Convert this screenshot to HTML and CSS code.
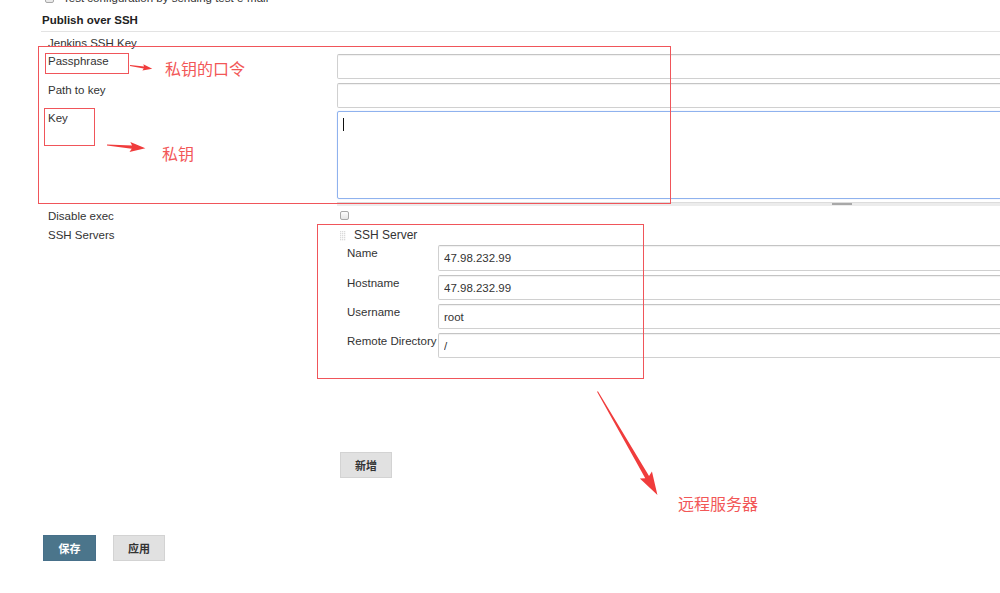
FILE: index.html
```html
<!DOCTYPE html>
<html>
<head>
<meta charset="utf-8">
<link rel="stylesheet" href="styles.css">
</head>
<body>
<div class="page">
  <div class="form">
    <div class="testline"><span class="cb"></span><span>Test configuration by sending test e-mail</span></div>
    <div class="sec-title">Publish over SSH</div>
    <div class="rows">
      <div class="row row-label">Jenkins SSH Key</div>
      <div class="row row-pass">
        <div class="lbl">Passphrase</div>
        <input class="txt" type="text" value="">
      </div>
      <div class="row row-path">
        <div class="lbl">Path to key</div>
        <input class="txt" type="text" value="">
      </div>
      <div class="row row-key">
        <div class="lbl">Key</div>
        <div class="keycol">
          <div class="area"><span class="caret"></span></div>
          <div class="grip"><span class="grip-knob"></span></div>
        </div>
      </div>
      <div class="row row-exec">
        <div class="lbl">Disable exec</div>
        <div><span class="cb cb-exec"></span></div>
      </div>
      <div class="row row-servers">
        <div class="lbl">SSH Servers</div>
        <div class="servers">
          <div class="srv-head"><span class="handle"></span><span>SSH Server</span></div>
          <div class="srv-rows">
            <div class="srow srow-first"><div class="slbl">Name</div><input class="txt" type="text" value="47.98.232.99"></div>
            <div class="srow"><div class="slbl">Hostname</div><input class="txt" type="text" value="47.98.232.99"></div>
            <div class="srow"><div class="slbl">Username</div><input class="txt" type="text" value="root"></div>
            <div class="srow"><div class="slbl">Remote Directory</div><input class="txt" type="text" value="/"></div>
          </div>
          <button class="btn btn-add">新增</button>
        </div>
      </div>
    </div>
    <div class="actions">
      <button class="btn btn-save">保存</button>
      <button class="btn btn-apply">应用</button>
    </div>
  </div>

  <svg class="notes" width="1000" height="593" viewBox="0 0 1000 593">
    <g fill="none" stroke="#f0555a" stroke-width="1">
      <rect x="38.5" y="46.5" width="632" height="157"/>
      <rect x="45.5" y="53.5" width="83" height="20"/>
      <rect x="44.5" y="108.5" width="50" height="37"/>
      <rect x="317.5" y="224.5" width="326" height="154"/>
    </g>
    <g fill="#f03c3c">
      <polygon transform="translate(130,65.5) rotate(8.4)" points="0,-0.5 14,-1 13,-3.2 22.5,0 13,3.2 14,1 0,0.5"/>
      <polygon transform="translate(107,145) rotate(5)" points="0,-0.6 25,-1.6 23,-5 38.5,0 23,5 25,1.6 0,0.6"/>
      <polygon transform="translate(597.5,391.5) rotate(59.9)" points="0,-0.5 99,-2.2 96.5,-7 119.5,0 96.5,7 99,2.2 0,0.5"/>
    </g>
  </svg>
  <div class="note note-pass">私钥的口令</div>
  <div class="note note-key">私钥</div>
  <div class="note note-srv">远程服务器</div>
</div>
</body>
</html>
```

FILE: styles.css
```css
html, body {
  margin: 0;
  padding: 0;
  background: #fff;
}
body {
  font-family: "Liberation Sans", Arial, "Noto Sans CJK SC", sans-serif;
  font-size: 11.5px;
  color: #333;
  overflow: hidden;
  width: 1000px;
  height: 593px;
}
.page {
  position: relative;
  width: 1000px;
  height: 593px;
  overflow: hidden;
}
.form {
  padding-left: 41px;
  width: 1400px;
}
.testline {
  margin-top: -9px;
  height: 14px;
  display: flex;
  align-items: center;
  gap: 9px;
  padding-left: 4px;
  line-height: 14px;
}
.cb {
  display: inline-block;
  box-sizing: border-box;
  width: 9px;
  height: 9px;
  border: 1px solid #a8a8a8;
  border-radius: 2px;
  background: linear-gradient(#fdfdfd, #e6e6e6);
}
.sec-title {
  margin-top: 7px;
  font-weight: bold;
  line-height: 16px;
  padding-bottom: 3px;
  padding-left: 1px;
  border-bottom: 1px solid #e3e3e3;
  color: #222;
}
.rows {
  padding-left: 7px;
}
.row {
  display: grid;
  grid-template-columns: 289px 1010px;
  align-items: start;
}
.row-label {
  display: block;
  margin-top: 3px;
  line-height: 16px;
}
.row-pass { margin-top: 3px; }
.row-path { margin-top: 4px; }
.row-key { margin-top: 3px; }
.row-exec { margin-top: 3px; }
.row-servers { margin-top: 5px; }
.lbl {
  line-height: 14px;
}
.txt {
  box-sizing: border-box;
  width: 100%;
  height: 25px;
  margin: 0;
  padding: 0 5px;
  border: 1px solid #d0d0d0;
  border-top-color: #c4c4c4;
  border-radius: 2px;
  box-shadow: inset 0 1px 1px rgba(0, 0, 0, 0.06);
  font-family: "Liberation Sans", Arial, sans-serif;
  font-size: 11.5px;
  color: #333;
  background: #fff;
  outline: none;
}
.keycol {
  display: flex;
  flex-direction: column;
}
.area {
  box-sizing: border-box;
  height: 88px;
  border: 1px solid #8fb2ee;
  border-radius: 2px;
  box-shadow: 0 0 1px rgba(120, 160, 230, 0.6);
  padding: 6px 5px;
}
.caret {
  display: block;
  width: 1px;
  height: 13px;
  background: #111;
}
.grip {
  margin-top: 3px;
  height: 4px;
  background: #ececec;
  border-top: 1px solid #dcdcdc;
  box-sizing: border-box;
  display: flex;
  justify-content: center;
}
.grip-knob {
  width: 20px;
  height: 2px;
  background: #a8a8a8;
}
.cb-exec {
  margin-left: 3px;
  margin-top: 2px;
  display: block;
}
.servers {
  padding-left: 3px;
}
.srv-head {
  display: flex;
  align-items: center;
  gap: 8px;
  height: 14px;
  line-height: 14px;
  font-size: 12px;
  color: #333;
}
.handle {
  display: inline-block;
  width: 6px;
  height: 10px;
  background-image:
    repeating-linear-gradient(90deg, #d6d6d6 0 1px, #f4f4f4 1px 2px),
    none;
  opacity: 0.9;
  margin-top: 1px;
  position: relative;
}
.handle::after {
  content: "";
  position: absolute;
  inset: 0;
  background: repeating-linear-gradient(0deg, rgba(255,255,255,0.7) 0 1px, transparent 1px 2px);
}
.srv-rows {
  margin-top: 3px;
  padding-left: 7px;
  display: flex;
  flex-direction: column;
  gap: 4px;
}
.srow {
  display: grid;
  grid-template-columns: 91px 900px;
  align-items: start;
}
.srow-first .txt {
  height: 26px;
}
.slbl {
  padding-top: 1px;
  line-height: 14px;
  white-space: nowrap;
}
.btn {
  box-sizing: border-box;
  height: 26px;
  border: 1px solid #d3d3d3;
  background: #e1e1e1;
  color: #333;
  font-family: "Noto Sans CJK SC", "Liberation Sans", sans-serif;
  font-size: 11px;
  font-weight: bold;
  padding: 0;
  margin: 0;
  display: inline-flex;
  align-items: center;
  justify-content: center;
}
.btn-add {
  width: 52px;
  margin-top: 94px;
  display: flex;
}
.actions {
  margin-top: 57px;
  padding-left: 2px;
  display: flex;
  gap: 17px;
}
.btn-save {
  width: 53px;
  background: #4b758b;
  border-color: #47708a;
  color: #fff;
}
.btn-apply {
  width: 52px;
}
.notes {
  position: absolute;
  left: 0;
  top: 0;
  pointer-events: none;
}
.note {
  position: absolute;
  font-family: "Noto Sans CJK SC", sans-serif;
  font-size: 16px;
  line-height: 16px;
  color: #f25757;
  white-space: nowrap;
}
.note-pass { left: 165px; top: 60px; }
.note-key { left: 162px; top: 145px; }
.note-srv { left: 678px; top: 495px; }
```
